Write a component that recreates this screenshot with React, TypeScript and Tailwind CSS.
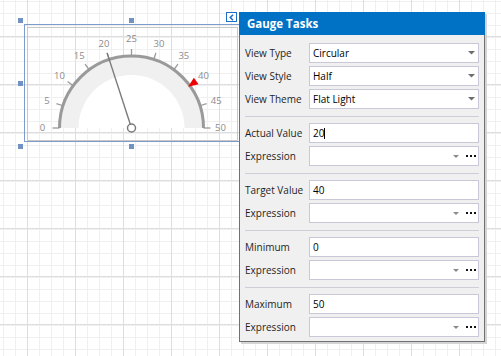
import React from "react";

const CX = 131.5;
const CY = 128;

function pt(r: number, v: number) {
  const a = Math.PI - (v / 50) * Math.PI;
  return { x: CX + r * Math.cos(a), y: CY - r * Math.sin(a) };
}

function Gauge() {
  const ticks = [0, 5, 10, 15, 20, 25, 30, 35, 40, 45, 50];
  const needle = pt(79, 20);
  // target marker
  const th = (40 / 50) * Math.PI;
  const a = Math.PI - th;
  const ux = Math.cos(a);
  const uy = -Math.sin(a);
  const px = -uy;
  const py = ux;
  const tip = { x: CX + 70 * ux, y: CY + 70 * uy };
  const bc = { x: CX + 80 * ux, y: CY + 80 * uy };
  const b1 = { x: bc.x + 4 * px, y: bc.y + 4 * py };
  const b2 = { x: bc.x - 4 * px, y: bc.y - 4 * py };
  return (
    <svg className="absolute left-0 top-0" width="240" height="150" viewBox="0 0 240 150">
      <path
        d={`M ${CX - 71} ${CY} A 71 71 0 0 1 ${CX + 71} ${CY} Z`}
        fill="#f0f0f0"
      />
      <path d={`M ${CX - 53} ${CY} A 53 53 0 0 1 ${CX + 53} ${CY} Z`} fill="#ffffff" />
      <path
        d={`M ${CX - 72} ${CY} A 72 72 0 0 1 ${CX + 72} ${CY}`}
        fill="none"
        stroke="#9a9a9a"
        strokeWidth="3"
      />
      {ticks.map((v) => {
        const p1 = pt(72, v);
        const p2 = pt(79, v);
        const l = pt(89, v);
        return (
          <g key={v}>
            <line x1={p1.x} y1={p1.y} x2={p2.x} y2={p2.y} stroke="#9a9a9a" strokeWidth="1.3" />
            <text
              x={l.x}
              y={l.y + 3.4}
              textAnchor="middle"
              fontSize="9.5"
              fill="#8c8c8c"
              fontFamily="'Open Sans', sans-serif"
            >
              {v}
            </text>
          </g>
        );
      })}
      <polygon
        points={`${tip.x},${tip.y} ${b1.x},${b1.y} ${b2.x},${b2.y}`}
        fill="#ee0000"
      />
      <line x1={CX} y1={CY} x2={needle.x} y2={needle.y} stroke="#7a7a7a" strokeWidth="1.4" />
      <circle cx={CX} cy={CY} r="4" fill="#ffffff" stroke="#7a7a7a" strokeWidth="1.5" />
    </svg>
  );
}

function SelectArrow() {
  return (
    <svg width="7" height="4" viewBox="0 0 7 4" className="shrink-0">
      <polygon points="0,0 7,0 3.5,3.5" fill="#6d6d6d" />
    </svg>
  );
}

function ExprButtons() {
  return (
    <div className="flex items-center shrink-0">
      <svg width="6" height="3" viewBox="0 0 6 3">
        <polygon points="0,0 6,0 3,3" fill="#8a8a8a" />
      </svg>
      <div className="ml-[7px] flex gap-[2px]">
        <span className="block w-[2px] h-[2px] bg-[#111]" />
        <span className="block w-[2px] h-[2px] bg-[#111]" />
        <span className="block w-[2px] h-[2px] bg-[#111]" />
      </div>
    </div>
  );
}

function Field({
  label,
  value,
  kind,
  cursor,
}: {
  label: string;
  value?: string;
  kind?: "select" | "expr";
  cursor?: boolean;
}) {
  return (
    <div className="flex items-center h-[20px]">
      <div className="w-[64px] text-[10px] leading-none text-[#1e1e1e]">{label}</div>
      <div
        className={`w-[170px] h-[20px] bg-white border border-[#c8c8d8] flex items-center pl-[3px] ${
          kind === "expr" ? "pr-[2px]" : "pr-[3px]"
        }`}
      >
        <span className="text-[10px] leading-none text-black">{value}</span>
        {cursor && <span className="block w-px h-[11px] bg-black" />}
        <div className="flex-1" />
        {kind === "select" && <SelectArrow />}
        {kind === "expr" && <ExprButtons />}
      </div>
    </div>
  );
}

function Sep() {
  return <div className="h-px bg-[#cdced8] mt-[7px] mb-[6px]" />;
}

export default function App() {
  return (
    <div
      className="relative w-[501px] h-[356px] overflow-hidden bg-white font-['Open_Sans',sans-serif] bg-[image:linear-gradient(to_right,#dedede_1px,transparent_1px),linear-gradient(to_bottom,#dedede_1px,transparent_1px),linear-gradient(to_right,#f0f0f0_1px,transparent_1px),linear-gradient(to_bottom,#f0f0f0_1px,transparent_1px)] bg-[size:48px_48px,48px_48px,12px_12px,12px_12px] bg-[position:27px_0px,0px_36px,3px_0px,0px_1px]"
    >
      {/* gauge control on the design surface */}
      <div className="absolute left-[24px] top-[24px] w-[216px] h-[118px] border border-[#7d9bcd]" />
      <div className="absolute left-[27px] top-[27px] w-[211px] h-[114px] border border-[#c8c8c8]" />
      <Gauge />
      <div className="absolute left-[18px] top-[18px] w-[5px] h-[5px] bg-[#7392c4]" />
      <div className="absolute left-[129px] top-[18px] w-[5px] h-[5px] bg-[#7392c4]" />
      <div className="absolute left-[18px] top-[81px] w-[5px] h-[5px] bg-[#7392c4]" />
      <div className="absolute left-[18px] top-[144px] w-[5px] h-[5px] bg-[#7392c4]" />
      <div className="absolute left-[129px] top-[144px] w-[5px] h-[5px] bg-[#7392c4]" />

      {/* smart tag button */}
      <div className="absolute left-[226px] top-[12px] w-[11px] h-[10px] bg-white border border-[#1c6fc4] flex items-center justify-center">
        <svg width="5" height="7" viewBox="0 0 5 7">
          <polyline points="4,0.8 1.3,3.5 4,6.2" fill="none" stroke="#1c6fc4" strokeWidth="1.6" />
        </svg>
      </div>

      {/* Gauge Tasks panel */}
      <div className="absolute left-[239px] top-[12px] w-[246px] bg-[#f0f0f0] border-x border-b border-[#707070] shadow-[2px_2px_0_#d4d4d4]">
        <div className="-mx-px h-[23px] bg-[#0072c6] flex items-center pl-[8px]">
          <span className="text-white font-bold text-[11.5px] leading-none">Gauge Tasks</span>
        </div>
        <div className="pl-[5px] pr-[5px] pt-[8px] pb-[4px]">
          <div className="flex flex-col gap-[3px]">
            <Field label="View Type" value="Circular" kind="select" />
            <Field label="View Style" value="Half" kind="select" />
            <Field label="View Theme" value="Flat Light" kind="select" />
          </div>
          <Sep />
          <div className="flex flex-col gap-[3px]">
            <Field label="Actual Value" value="20" cursor />
            <Field label="Expression" kind="expr" />
          </div>
          <Sep />
          <div className="flex flex-col gap-[3px]">
            <Field label="Target Value" value="40" />
            <Field label="Expression" kind="expr" />
          </div>
          <Sep />
          <div className="flex flex-col gap-[3px]">
            <Field label="Minimum" value="0" />
            <Field label="Expression" kind="expr" />
          </div>
          <Sep />
          <div className="flex flex-col gap-[3px]">
            <Field label="Maximum" value="50" />
            <Field label="Expression" kind="expr" />
          </div>
        </div>
      </div>
    </div>
  );
}
